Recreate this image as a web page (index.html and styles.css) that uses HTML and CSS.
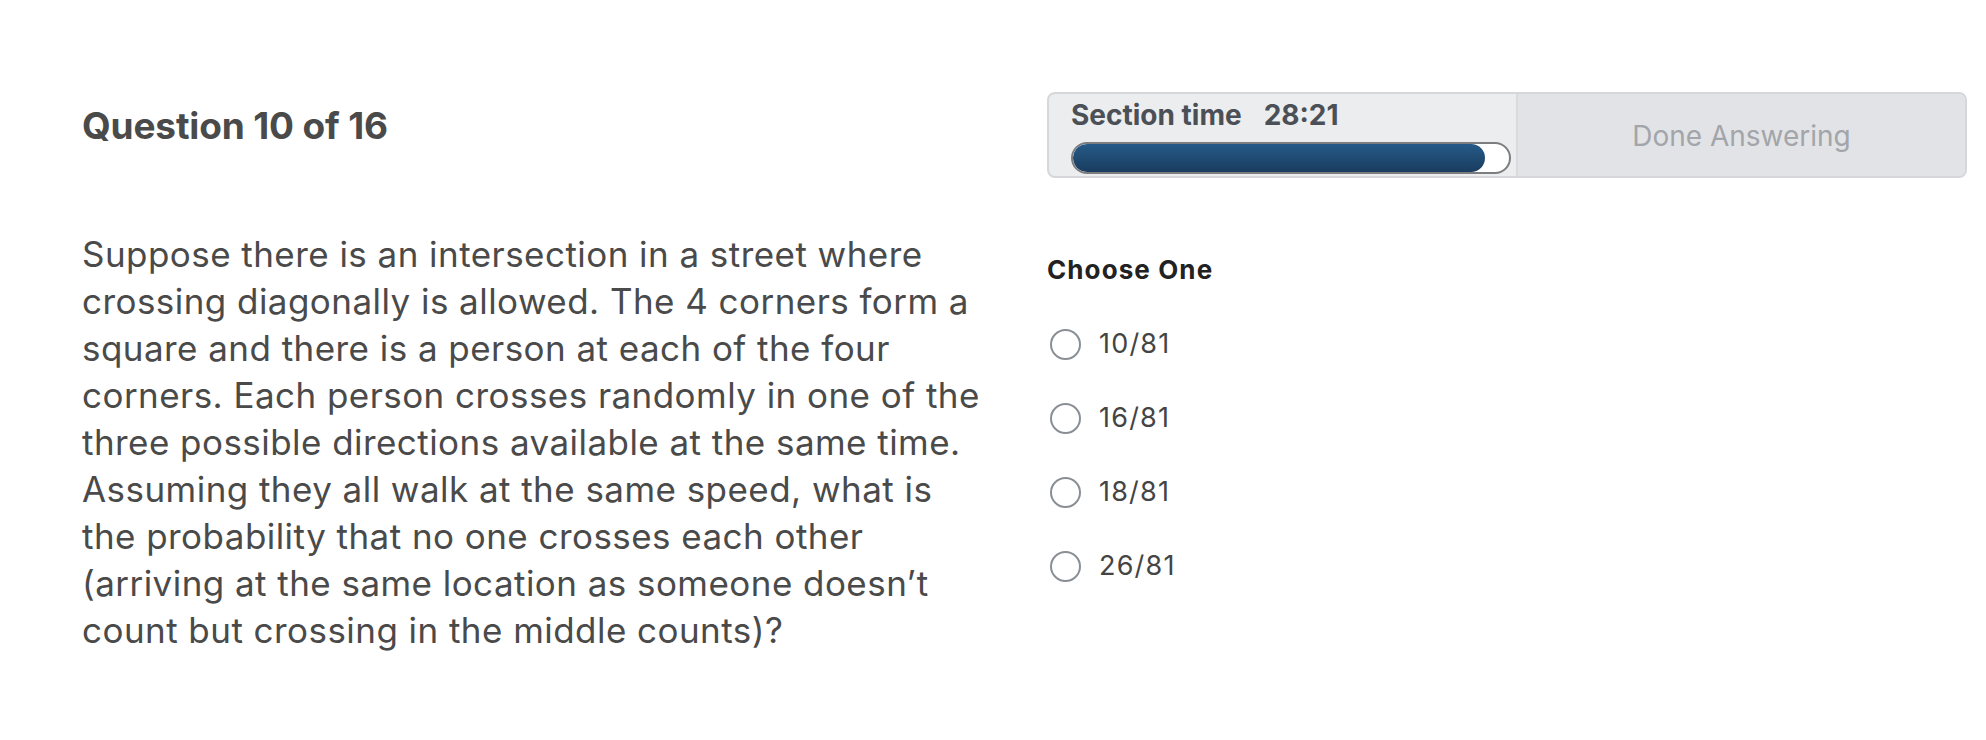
FILE: index.html
```html
<!DOCTYPE html>
<html lang="en">
<head>
<meta charset="utf-8">
<title>Question 10 of 16</title>
<link rel="stylesheet" href="styles.css">
</head>
<body>
<main class="page">
  <section class="left">
    <h1 class="q-title">Question 10 of 16</h1>
    <p class="q-text">Suppose there is an intersection in a street where crossing diagonally is allowed. The 4 corners form a square and there is a person at each of the four corners. Each person crosses randomly in one of the three possible directions available at the same time. Assuming they all walk at the same speed, what is the probability that no one crosses each other (arriving at the same location as someone doesn’t count but crossing in the middle counts)?</p>
  </section>
  <section class="right">
    <div class="status">
      <div class="timer">
        <div class="timer-label"><span>Section time</span><span class="timer-value">28:21</span></div>
        <div class="bar"><div class="bar-fill" style="width: 94.5%"></div></div>
      </div>
      <button class="done" type="button">Done Answering</button>
    </div>
    <h2 class="choose">Choose One</h2>
    <ul class="options">
      <li class="option"><span class="radio"></span><span class="opt-text">10/81</span></li>
      <li class="option"><span class="radio"></span><span class="opt-text">16/81</span></li>
      <li class="option"><span class="radio"></span><span class="opt-text">18/81</span></li>
      <li class="option"><span class="radio"></span><span class="opt-text">26/81</span></li>
    </ul>
  </section>
</main>
</body>
</html>
```

FILE: styles.css
```css
* { box-sizing: border-box; }
html, body {
  margin: 0;
  padding: 0;
  background: #ffffff;
}
body {
  font-family: Inter, "Noto Sans", "Liberation Sans", sans-serif;
  color: #4a4a4a;
}
.page {
  display: flex;
  gap: 56px;
  padding: 92px 20px 0 82px;
}
.left {
  width: 908px;
  flex: none;
}
.q-title {
  margin: 12px 0 0;
  font-size: 37px;
  line-height: 44px;
  font-weight: 700;
  color: #4a4a4a;
  letter-spacing: -0.15px;
}
.q-text {
  margin: 83px 0 0;
  font-size: 35px;
  line-height: 47px;
  font-weight: 400;
  letter-spacing: 0.45px;
  color: #4a4a4a;
}
.right {
  width: 920px;
  flex: none;
  margin-left: 1px;
}
.status {
  display: flex;
  height: 86px;
  border: 2px solid #d6d7da;
  border-radius: 8px;
  overflow: hidden;
  background: #ecedef;
}
.timer {
  width: 469px;
  flex: none;
  padding: 5px 0 0 22px;
  border-right: 2px solid #d9dadd;
}
.timer-label {
  display: flex;
  gap: 22px;
  font-size: 28px;
  line-height: 32px;
  font-weight: 700;
  color: #4b5056;
}
.bar {
  margin-top: 11px;
  width: 440px;
  height: 32px;
  border: 2px solid #7b7d80;
  border-radius: 16px;
  background: #ffffff;
  overflow: hidden;
}
.bar-fill {
  height: 100%;
  border-radius: 14px;
  background: linear-gradient(#255a88, #1a3c5e);
}
.done {
  flex: 1;
  border: 0;
  margin: 0;
  padding: 2px 0 0;
  background: #e2e3e6;
  font-family: inherit;
  font-size: 28px;
  font-weight: 400;
  color: #a2a5a9;
}
.choose {
  margin: 78px 0 0;
  font-size: 26px;
  line-height: 28px;
  font-weight: 700;
  letter-spacing: 1.1px;
  color: #222222;
}
.options {
  list-style: none;
  margin: 44px 0 0;
  padding: 0 0 0 3px;
  display: flex;
  flex-direction: column;
  gap: 42px;
}
.option {
  display: flex;
  align-items: center;
  gap: 18px;
  height: 32px;
}
.radio {
  width: 31px;
  height: 31px;
  border: 2px solid #8a8f95;
  border-radius: 50%;
  flex: none;
}
.opt-text {
  font-size: 27px;
  line-height: 32px;
  letter-spacing: 1.2px;
  color: #444444;
}
```
